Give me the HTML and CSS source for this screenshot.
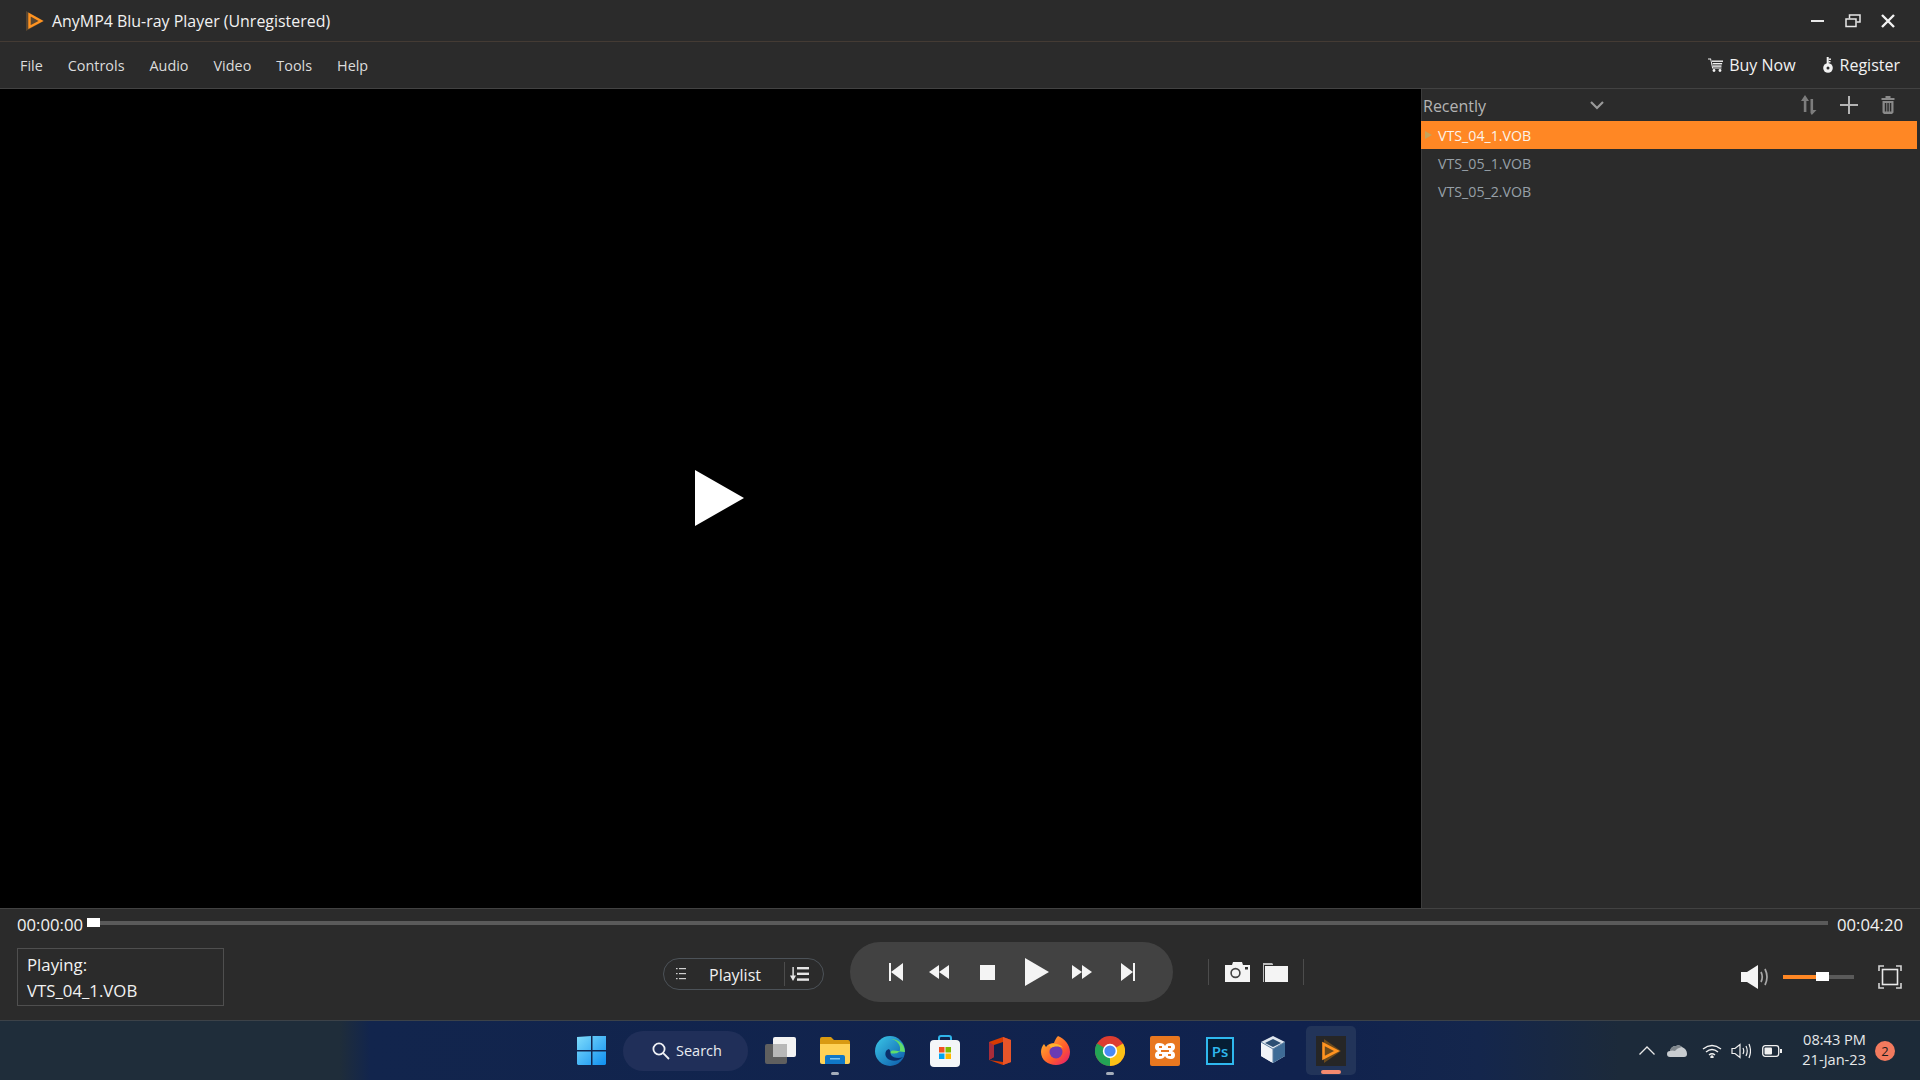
FILE: index.html
```html
<!DOCTYPE html>
<html lang="en">
<head>
    <meta charset="UTF-8">
    <title>AnyMP4 Blu-ray Player</title>
    <link rel="stylesheet" href="styles.css">
</head>
<body>
    <div class="titlebar">
        <svg class="logo" width="20" height="20" viewBox="0 0 20 20">
            <path d="M1 0 L19 10 L1 20 Z" fill="#5a4630"/>
            <path d="M4.5 3.5 L16 10 L4.5 16 Z" fill="none" stroke="#ff9320" stroke-width="2.4"/>
        </svg>
        <span class="title">AnyMP4 Blu-ray Player (Unregistered)</span>
        <div class="winbtns">
            <svg width="14" height="14" viewBox="0 0 14 14"><rect x="0" y="6" width="13" height="2" fill="#e8e8e8"/></svg>
            <svg width="16" height="14" viewBox="0 0 16 14" fill="none" stroke="#e8e8e8" stroke-width="1.5"><rect x="1" y="5" width="10" height="7.5"/><path d="M4.5 4.5V1H15V8H11.5"/></svg>
            <svg width="14" height="14" viewBox="0 0 14 14" stroke="#f2f2f2" stroke-width="2.4"><path d="M1 1L13 13M13 1L1 13"/></svg>
        </div>
    </div>

    <div class="menubar">
        <a>File</a><a>Controls</a><a>Audio</a><a>Video</a><a>Tools</a><a>Help</a>
        <div class="menuright">
            <span class="menulink">
                <svg width="15" height="14" viewBox="0 0 15 14" fill="#f2f2f2"><path d="M0 0.5H3L5 9.5H13.5V10.5H4.2L2.3 1.5H0Z"/><rect x="4" y="2.5" width="11" height="1.4"/><rect x="4.6" y="5" width="9.5" height="1.4"/><rect x="5" y="7.4" width="8.5" height="1.4"/><circle cx="6" cy="12.5" r="1.4"/><circle cx="12" cy="12.5" r="1.4"/></svg>
                Buy Now
            </span>
            <span class="menulink reg">
                <svg width="10" height="16" viewBox="0 0 10 16"><circle cx="5" cy="11" r="4.8" fill="#f2f2f2"/><circle cx="5" cy="11" r="1.5" fill="#2b2b2b"/><rect x="3.7" y="0" width="2" height="7" fill="#f2f2f2"/><rect x="5.5" y="1.5" width="2.5" height="1.4" fill="#f2f2f2"/><rect x="5.5" y="4" width="2" height="1.4" fill="#f2f2f2"/></svg>
                Register
            </span>
        </div>
    </div>

    <div class="main">
        <div class="video">
            <svg class="bigplay" width="49" height="56" viewBox="0 0 49 56"><path d="M0 0L49 28L0 56Z" fill="#fff"/></svg>
        </div>
        <div class="sidebar">
            <div class="sidehead">
                <span class="recent">Recently</span>
                <svg class="chev" width="14" height="9" viewBox="0 0 14 9" fill="none" stroke="#9a9a9a" stroke-width="2.2"><path d="M1 1L7 7L13 1"/></svg>
                <svg class="ic-sort" width="16" height="20" viewBox="0 0 16 20" fill="#7d7d7d"><path d="M4 0L8 6H5.4V17H2.8V6H0Z"/><path d="M9.5 4H12.1V15H15.5L10.8 20L9.5 18Z"/></svg>
                <svg class="ic-plus" width="18" height="18" viewBox="0 0 18 18" fill="#b4b4b4"><rect x="8" y="0" width="2" height="18"/><rect x="0" y="8" width="18" height="2"/></svg>
                <svg class="ic-trash" width="14" height="18" viewBox="0 0 14 18" fill="#8a8a8a"><rect x="4.5" y="0" width="5" height="2"/><rect x="0.5" y="2" width="13" height="2"/><path d="M1.5 5H12.5V16.5L11 18H3L1.5 16.5ZM3.8 7V15.5H5.3V7ZM6.3 7V15.5H7.8V7ZM8.8 7V15.5H10.3V7Z" fill-rule="evenodd"/></svg>
            </div>
            <div class="row active"><i class="rowplay"></i>VTS_04_1.VOB</div>
            <div class="row">VTS_05_1.VOB</div>
            <div class="row">VTS_05_2.VOB</div>
        </div>
    </div>

    <div class="controls">
        <div class="seek">
            <span class="time">00:00:00</span>
            <div class="track"><div class="thumb"></div></div>
            <span class="time">00:04:20</span>
        </div>
        <div class="bottom">
            <div class="nowplaying">Playing:<br>VTS_04_1.VOB</div>

            <div class="playlistpill">
                <svg width="10" height="12" viewBox="0 0 10 12" fill="#d0d0d0"><rect y="0" width="1.6" height="1.2"/><rect y="5" width="1.6" height="1.2"/><rect y="10" width="1.6" height="1.2"/><rect x="3" y="0" width="7" height="1.2"/><rect x="3" y="5" width="7" height="1.2"/><rect x="3" y="10" width="7" height="1.2"/></svg>
                <span class="pilltext">Playlist</span>
                <i class="pillsep"></i>
                <svg width="19" height="14" viewBox="0 0 19 14" fill="#e6e6e6"><rect x="7" y="0" width="12" height="2.4"/><rect x="7" y="5.6" width="12" height="2.4"/><rect x="7" y="11.4" width="12" height="2.4"/><rect x="2.4" y="0" width="1.4" height="10"/><path d="M0 8.5H6L3 14Z"/></svg>
            </div>

            <div class="transport">
                <svg width="14" height="18" viewBox="0 0 14 18" fill="#f4f4f4"><rect width="2" height="18"/><path d="M14 0V18L2 9Z"/></svg>
                <svg class="t-rew" width="20" height="14" viewBox="0 0 20 14" fill="#f4f4f4"><path d="M10 0V14L0 7Z"/><path d="M20 0V14L10 7Z"/></svg>
                <svg class="t-stop" width="15" height="15" viewBox="0 0 15 15" fill="#f4f4f4"><rect width="15" height="15"/></svg>
                <svg class="t-play" width="24" height="28" viewBox="0 0 24 28" fill="#f4f4f4"><path d="M0 0L24 14L0 28Z"/></svg>
                <svg class="t-ff" width="20" height="14" viewBox="0 0 20 14" fill="#f4f4f4"><path d="M0 0V14L10 7Z"/><path d="M10 0V14L20 7Z"/></svg>
                <svg class="t-next" width="14" height="18" viewBox="0 0 14 18" fill="#f4f4f4"><rect x="12" width="2" height="18"/><path d="M0 0V18L12 9Z"/></svg>
            </div>

            <div class="shots">
                <svg width="25" height="20" viewBox="0 0 25 20"><path d="M0 3H7L8 0H17L18 3H25V20H0Z" fill="#f4f4f4"/><circle cx="10.5" cy="11" r="4.4" fill="none" stroke="#444" stroke-width="1.6"/><rect x="20" y="5" width="3" height="2.5" fill="#333"/></svg>
                <svg width="25" height="20" viewBox="0 0 25 20" fill="#f4f4f4"><path d="M0 2V1H9L10 2V3H1V20H0Z" fill="#bdbdbd"/><rect x="2" y="4" width="23" height="16"/></svg>
            </div>

            <div class="volume">
                <svg width="28" height="24" viewBox="0 0 28 24"><rect x="0" y="7" width="6" height="10" fill="#f4f4f4"/><path d="M6 7L17 0V24L6 17Z" fill="#f4f4f4"/><path d="M20 7Q22.5 12 20 17M24 4Q28 12 24 20" fill="none" stroke="#a8a8a8" stroke-width="1.7"/></svg>
                <div class="volbar"><div class="volfill"></div><div class="volthumb"></div></div>
                <svg class="fullscr" width="24" height="24" viewBox="0 0 24 24" fill="none"><path d="M1 6V1H6M18 1H23V6M23 18V23H18M6 23H1V18" stroke="#d4d4d4" stroke-width="1.6"/><rect x="4.5" y="4.5" width="15" height="15" stroke="#e8e8e8" stroke-width="1.6"/></svg>
            </div>
        </div>
    </div>

    <div class="taskbar">
        <div class="apps">
            <span class="app startbtn">
                <svg width="30" height="30" viewBox="0 0 30 30"><defs><linearGradient id="win" x1="0" y1="0" x2="1" y2="1"><stop offset="0" stop-color="#7fdcfb"/><stop offset="1" stop-color="#0f8ff0"/></linearGradient></defs><path d="M0 1L14 0V14H0ZM15.500 0H29V14H15.500ZM0 15.500H14V29H1L0 28ZM15.500 15.500H29V28L28 29H15.500Z" fill="url(#win)"/></svg>
            </span>
            <div class="search">
                <svg width="18" height="18" viewBox="0 0 18 18" fill="none" stroke="#f0f2f6" stroke-width="1.8"><circle cx="7" cy="7" r="5.6"/><path d="M11.200 11.200L17 17"/></svg>
                <span>Search</span>
            </div>
            <span class="app">
                <svg width="31" height="28" viewBox="0 0 31 28"><rect x="0" y="7" width="22" height="20" rx="2" fill="#5f5f5f"/><rect x="8" y="0" width="23" height="20" rx="2" fill="#f3f3f3"/><rect x="8" y="7" width="14" height="13" fill="#b8b8b8"/></svg>
            </span>
            <span class="app dot">
                <svg width="30" height="27" viewBox="0 0 30 27"><path d="M0 2Q0 0 2 0H11L14 3H28Q30 3 30 5V8H0Z" fill="#d99a12"/><path d="M0 7H30V25Q30 27 28 27H2Q0 27 0 25Z" fill="#ffd257"/><path d="M5 20Q5 18 7 18H23Q25 18 25 20V27H5Z" fill="#1078c8"/><rect x="10" y="21" width="10" height="1.500" fill="#7fc6f2"/></svg>
            </span>
            <span class="app">
                <svg width="30" height="30" viewBox="0 0 30 30"><defs><linearGradient id="edge" x1="0" y1="0" x2="1" y2="1"><stop offset="0" stop-color="#3bc8e8"/><stop offset="1" stop-color="#0b57a8"/></linearGradient></defs><circle cx="15" cy="15" r="15" fill="url(#edge)"/><path d="M30 16C30 8 23 3 16 3C21 4 26 8 25 14C24 18 18 18 15 17C16 12 24 16 30 16Z" fill="#5fdc6c"/><path d="M14 13C9 14 9 22 15 24C20 26 25 24 28 21C24 23 18 22 16 19C15 17 16 15 14 13Z" fill="#0c2e6a"/></svg>
            </span>
            <span class="app">
                <svg width="30" height="32" viewBox="0 0 30 32"><path d="M9 7V3Q9 1 11 1H19Q21 1 21 3V7" fill="none" stroke="#30b4ea" stroke-width="2"/><rect x="0" y="5" width="30" height="27" rx="4" fill="#f4f6f8"/><rect x="9" y="12" width="5.500" height="5.500" fill="#f25022"/><rect x="15.500" y="12" width="5.500" height="5.500" fill="#7fba00"/><rect x="9" y="18.500" width="5.500" height="5.500" fill="#00a4ef"/><rect x="15.500" y="18.500" width="5.500" height="5.500" fill="#ffb900"/></svg>
            </span>
            <span class="app">
                <svg width="22" height="28" viewBox="0 0 22 28"><path d="M0 5L14 0L22 3V25L14 28L0 23L14 25V5L5 8V20L0 23Z" fill="#d83b01"/><path d="M0 5L5 8V20L0 23Z" fill="#a82c3a"/><path d="M14 0L22 3V25L14 28Z" fill="#e8552a"/></svg>
            </span>
            <span class="app">
                <svg width="29" height="29" viewBox="0 0 29 29"><defs><linearGradient id="fox" x1="0" y1="0" x2="1" y2="1"><stop offset="0" stop-color="#ffc02c"/><stop offset=".6" stop-color="#ff5a2c"/><stop offset="1" stop-color="#e0157a"/></linearGradient></defs><path d="M17 0C24 3 29 9 29 16C29 24 23 29 15 29C7 29 0 24 0 16C0 13 1 10 3 8L5 11C7 8 10 7 13 7C14 4 15 2 17 0Z" fill="url(#fox)"/><circle cx="15" cy="16" r="6.500" fill="#6a3bb4"/><path d="M8 9C12 7 19 7 22 12C18 10 13 10 10 12Z" fill="#ffb32c"/></svg>
            </span>
            <span class="app dot">
                <svg width="30" height="30" viewBox="0 0 30 30"><circle cx="15" cy="15" r="15" fill="#dd3d31"/><path d="M15 15L28 7.500A15 15 0 0 1 15 30Z" fill="#fbc116"/><path d="M15 15L15 30A15 15 0 0 1 2 7.500Z" fill="#23a455"/><circle cx="15" cy="15" r="7.200" fill="#fff"/><circle cx="15" cy="15" r="5.600" fill="#4a8af4"/></svg>
            </span>
            <span class="app">
                <svg width="30" height="30" viewBox="0 0 30 30"><rect width="30" height="30" rx="2" fill="#e8771f"/><path d="M9 7Q14 7 15 10Q16 7 21 7Q25 7 25 11Q25 14 22 15Q25 16 25 19Q25 23 21 23Q16 23 15 20Q14 23 9 23Q5 23 5 19Q5 16 8 15Q5 14 5 11Q5 7 9 7Z" fill="#fff"/><path d="M9 11H12M18 11H21M9 19H12M18 19H21M11 15H19" stroke="#e8771f" stroke-width="2"/></svg>
            </span>
            <span class="app psbtn">
                <span class="ps">Ps</span>
            </span>
            <span class="app">
                <svg width="26" height="29" viewBox="0 0 26 29"><path d="M13 0L25 6V20L13 27L1 20V6Z" fill="#dfe6ee"/><path d="M13 13L25 6V20L13 27Z" fill="#3f6c96"/><path d="M13 13L1 6V20L13 27Z" fill="#f2f4f8"/><path d="M13 3L21 7L13 11L5 7Z" fill="#2d4f73"/><path d="M1 6L13 13L25 6M13 13V27" fill="none" stroke="#5f7f9f" stroke-width="1"/></svg>
            </span>
            <span class="app running">
                <span class="appthumb">
                    <svg width="20" height="24" viewBox="0 0 20 24"><path d="M3 0L20 12L3 24Z" fill="#6a4a1e"/><path d="M2.500 5L16 12L2.500 19Z" fill="none" stroke="#ff9320" stroke-width="2.600"/></svg>
                </span>
                <i class="runbar"></i>
            </span>
        </div>
        <div class="tray">
            <svg width="16" height="9" viewBox="0 0 16 9" fill="none" stroke="#e8e8e8" stroke-width="1.300"><path d="M0.500 8.500L8 1L15.500 8.500"/></svg>
            <svg class="cloud" width="20" height="13" viewBox="0 0 20 13"><path d="M3 13Q0 13 0 10Q0 7 3 7Q4 2 9 2Q12 0 15 3Q20 5 20 10Q20 13 17 13Z" fill="#c8ccd0"/><path d="M3 7Q4 2 9 2Q12 0 15 3Q10 4 8 7Q5 6 3 7Z" fill="#7f868c"/></svg>
            <svg class="wifi" width="20" height="14" viewBox="0 0 20 14" fill="none" stroke="#f0f0f0" stroke-width="1.400"><path d="M1 5Q10 -2 19 5M4 8Q10 3 16 8M7 11Q10 8.500 13 11"/><circle cx="10" cy="13" r="1" fill="#f0f0f0"/></svg>
            <svg class="spk" width="20" height="16" viewBox="0 0 20 16" fill="none" stroke="#f0f0f0" stroke-width="1.200"><path d="M1 5.500H4L9 1.500V14.500L4 10.500H1Z"/><path d="M12 5Q13.500 8 12 11M15 3Q17.500 8 15 13M18 1Q21 8 18 15"/></svg>
            <svg class="batt" width="20" height="12" viewBox="0 0 20 12"><rect x="0.700" y="0.700" width="16" height="10.600" rx="2.500" fill="none" stroke="#f0f0f0" stroke-width="1.300"/><rect x="2.500" y="2.500" width="7.500" height="7" rx="1" fill="#f0f0f0"/><rect x="18" y="4" width="2" height="4" fill="#f0f0f0"/></svg>
            <div class="clock">08:43 PM<br>21-Jan-23</div>
            <span class="badge">2</span>
        </div>
    </div>
</body>
</html>
```

FILE: styles.css
```css
* {
    box-sizing: border-box;
}
html, body {
    margin: 0;
    height: 100%;
}
body {
    width: 1920px;
    height: 1080px;
    overflow: hidden;
    display: flex;
    flex-direction: column;
    background-color: #2b2b2b;
    color: #eeeeee;
    font-family: "Open Sans", "Noto Sans", sans-serif;
    font-size: 15px;
}
svg {
    display: block;
    flex: none;
}

.titlebar {
    height: 42px;
    display: flex;
    align-items: center;
    padding-left: 25px;
    border-bottom: 1px solid #443b34;
}
.title {
    margin-left: 7px;
    font-size: 15.950px;
    color: #f2f2f2;
}
.winbtns {
    margin-left: auto;
    display: flex;
    align-items: center;
    gap: 20px;
    padding-right: 25px;
}

.menubar {
    height: 47px;
    display: flex;
    align-items: center;
    gap: 25px;
    padding: 0 20px;
    border-bottom: 1px solid #424242;
    font-size: 14.400px;
    color: #dcdcdc;
}
.menuright {
    margin-left: auto;
    display: flex;
    gap: 27px;
    font-size: 16px;
    color: #f2f2f2;
}
.menulink {
    display: flex;
    align-items: center;
    gap: 6px;
}
.menulink.reg {
    gap: 7px;
}

.main {
    flex: 1;
    display: flex;
    min-height: 0;
}
.video {
    width: 1421px;
    background-color: #000;
    display: flex;
    align-items: center;
    justify-content: center;
}
.bigplay {
    margin: 0 0 1px 18px;
}
.sidebar {
    flex: 1;
    border-left: 1px solid #3c3c3c;
    padding-right: 3px;
}
.sidehead {
    height: 32px;
    display: flex;
    align-items: center;
    padding-left: 1px;
    color: #b4b4b4;
}
.recent {
    width: 167px;
    padding-top: 1px;
    font-size: 16px;
}
.ic-sort {
    margin-left: 197px;
}
.ic-plus {
    margin-left: 23px;
}
.ic-trash {
    margin-left: 23px;
}
.row {
    height: 28px;
    line-height: 29px;
    margin-left: -1px;
    padding-left: 17px;
    font-size: 14.200px;
    color: #97a0a8;
    position: relative;
}
.row.active {
    background-color: #ff8724;
    color: #fbf3e9;
}
.rowplay {
    position: absolute;
    left: 4px;
    top: 10px;
    border-left: 7px solid #c7a35a;
    border-top: 4px solid transparent;
    border-bottom: 4px solid transparent;
}

.controls {
    height: 113px;
    border-top: 1px solid #424242;
    border-bottom: 1px solid #3c4248;
}
.seek {
    height: 30px;
    display: flex;
    align-items: center;
    padding: 0 17px;
}
.time {
    width: 66px;
    font-size: 16.700px;
    color: #f2f2f2;
    white-space: nowrap;
}
.track {
    flex: 1;
    height: 4px;
    margin: -2px 9px 0 4px;
    background-color: #5a5a5a;
    position: relative;
}
.thumb {
    position: absolute;
    left: 0;
    top: -3px;
    width: 13px;
    height: 9px;
    background-color: #fff;
}
.bottom {
    display: flex;
    align-items: flex-start;
    padding-left: 17px;
}
.nowplaying {
    width: 207px;
    height: 58px;
    margin-top: 9px;
    padding: 3px 9px 0;
    border: 1px solid #4f4f4f;
    font-size: 16.800px;
    line-height: 26px;
    color: #f2f2f2;
    white-space: nowrap;
}
.playlistpill {
    width: 161px;
    height: 32px;
    margin: 19px 0 0 439px;
    display: flex;
    align-items: center;
    padding-left: 12px;
    border: 1px solid #4c5258;
    border-radius: 16px;
}
.pilltext {
    margin-left: 23px;
    padding-top: 1px;
    width: 75px;
    font-size: 16px;
    color: #f0f0f0;
}
.pillsep {
    width: 1px;
    height: 24px;
    background-color: #4c4c4c;
    margin-right: 5px;
}
.transport {
    width: 323px;
    height: 60px;
    margin: 3px 0 0 26px;
    padding-left: 39px;
    display: flex;
    align-items: center;
    background-color: #424242;
    border-radius: 30px;
}
.t-rew {
    margin-left: 26px;
}
.t-stop {
    margin-left: 31px;
}
.t-play {
    margin-left: 30px;
}
.t-ff {
    margin-left: 23px;
}
.t-next {
    margin-left: 29px;
}
.shots {
    width: 96px;
    height: 26px;
    margin: 20px 0 0 35px;
    display: flex;
    align-items: center;
    justify-content: center;
    gap: 13px;
    border-left: 1px solid #4c4c4c;
    border-right: 1px solid #4c4c4c;
}
.volume {
    margin: 26px 0 0 437px;
    display: flex;
    align-items: center;
}
.volbar {
    width: 71px;
    height: 4px;
    margin-left: 14px;
    background-color: #5a5a5a;
    position: relative;
}
.volfill {
    width: 40px;
    height: 4px;
    background-color: #ff8724;
}
.volthumb {
    position: absolute;
    left: 33px;
    top: -3px;
    width: 13px;
    height: 9px;
    background-color: #fff;
}
.fullscr {
    margin-left: 24px;
}

.taskbar {
    height: 59px;
    display: flex;
    align-items: center;
    position: relative;
    background: linear-gradient(90deg, #1f2d3a 0, #1f2d3a 340px, #12254d 370px, #10224e 1300px, #14264c 1480px, #1c2a3a 1620px, #1c2a38 100%);
}
.apps {
    display: flex;
    align-items: center;
    gap: 5px;
    margin-left: 567px;
}
.app {
    width: 50px;
    height: 49px;
    display: flex;
    align-items: center;
    justify-content: center;
    position: relative;
}
.startbtn {
    margin-right: 1px;
}
.psbtn {
    margin-left: 0;
    margin-right: -2px;
}
.app.dot::after {
    content: "";
    position: absolute;
    bottom: 0;
    left: 21px;
    width: 8px;
    height: 3px;
    border-radius: 2px;
    background-color: #a5adba;
}
.app.running {
    background-color: #223459;
    border-radius: 5px;
    margin-left: 3px;
}
.appthumb {
    width: 30px;
    height: 30px;
    display: flex;
    align-items: center;
    justify-content: center;
    background-color: #262626;
}
.runbar {
    position: absolute;
    bottom: 1px;
    left: 15px;
    width: 20px;
    height: 4px;
    border-radius: 2px;
    background-color: #f58a6f;
}
.search {
    width: 125px;
    height: 40px;
    margin-right: 2px;
    display: flex;
    align-items: center;
    gap: 6px;
    padding-left: 29px;
    background-color: #202f59;
    border-radius: 20px;
    font-size: 14.500px;
    color: #e8ebf0;
}
.ps {
    width: 28px;
    height: 28px;
    display: flex;
    align-items: center;
    justify-content: center;
    background-color: #061e34;
    border: 2px solid #2fb8ee;
    color: #2fb8ee;
    font-size: 15px;
    font-weight: 600;
}
.tray {
    margin-left: auto;
    padding-right: 25px;
    display: flex;
    align-items: center;
}
.cloud {
    margin-left: 12px;
}
.wifi {
    margin-left: 15px;
}
.spk {
    margin-left: 9px;
}
.batt {
    margin-left: 11px;
}
.clock {
    margin: -4px 0 0 20px;
    text-align: right;
    font-size: 14.600px;
    line-height: 20px;
    color: #e6e8ea;
}
.badge {
    width: 20px;
    height: 20px;
    margin-left: 9px;
    border-radius: 50%;
    background-color: #f27a5e;
    color: #1c1c1c;
    font-size: 13px;
    line-height: 20px;
    text-align: center;
}
```
